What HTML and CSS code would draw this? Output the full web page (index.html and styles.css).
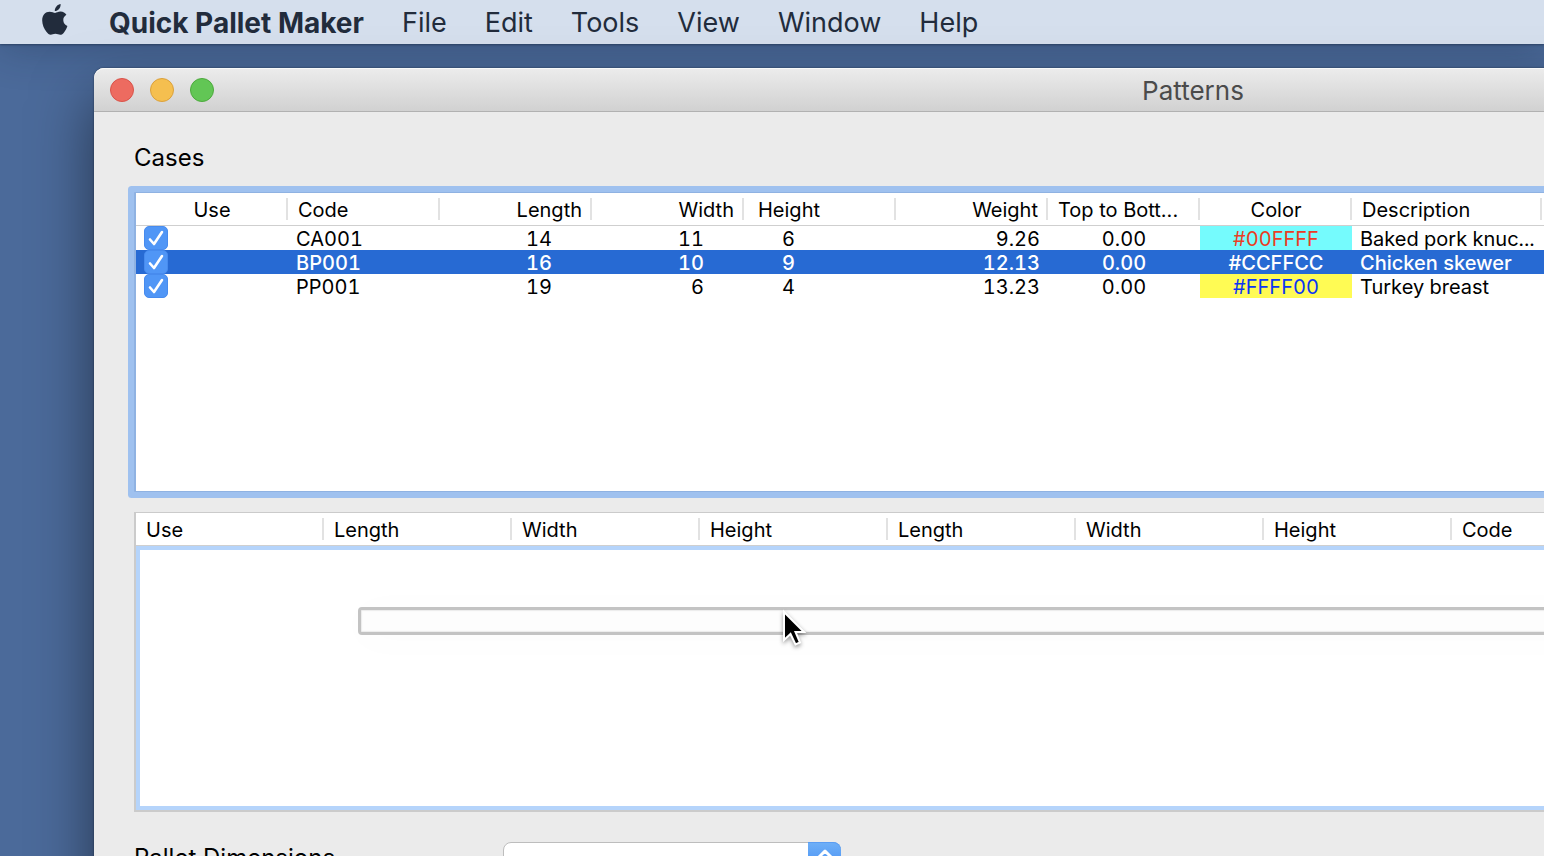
FILE: index.html
```html
<!DOCTYPE html>
<html lang="en">
<head>
<meta charset="utf-8">
<title>Quick Pallet Maker</title>
<link rel="stylesheet" href="styles.css">
</head>
<body>
<nav class="menubar" aria-label="Application menu">
  <button class="apple" type="button" aria-label="Apple menu">
    <svg width="28" height="34" viewBox="0 0 28 34" fill="currentColor" aria-hidden="true">
      <path d="M19.6 1C19.8 3.2 19 5 17.800 6.300C16.700 7.500 15.200 8.200 13.800 8.100C13.600 6.200 14.500 4.400 15.600 3.200C16.700 2 18.300 1.100 19.600 1Z"/>
      <path d="M14.100 9.900C15.400 9.900 17 8.600 19.500 8.600C22.200 8.700 24.200 9.900 25.400 11.800C23.200 13.200 22.200 15 22.300 17.300C22.400 20 23.900 22 26.400 23C25.700 25.300 24.400 27.600 23 29.400C21.900 30.800 20.800 31.800 19.200 31.800C17.500 31.800 16.700 30.800 14.400 30.800C12.200 30.800 11.300 31.800 9.700 31.800C8 31.800 6.800 30.500 5.600 29C3.100 26 1.200 21.600 1.200 17.500C1.200 12 4.500 8.700 8.500 8.700C11 8.700 12.800 9.900 14.100 9.900Z"/>
    </svg>
  </button>
  <button class="menu app-name" type="button">Quick Pallet Maker</button>
  <button class="menu" type="button">File</button>
  <button class="menu" type="button">Edit</button>
  <button class="menu" type="button">Tools</button>
  <button class="menu" type="button">View</button>
  <button class="menu" type="button">Window</button>
  <button class="menu" type="button">Help</button>
</nav>

<main class="window">
  <header class="titlebar">
    <div class="lights">
      <button class="light close" type="button" aria-label="Close"></button>
      <button class="light minimize" type="button" aria-label="Minimize"></button>
      <button class="light zoom" type="button" aria-label="Zoom"></button>
    </div>
    <h1 class="title">Patterns</h1>
  </header>

  <div class="content">
    <h2 class="label" id="cases-label">Cases</h2>
    <div class="list cases">
      <table aria-labelledby="cases-label">
        <colgroup>
          <col class="std"><col class="std"><col class="std"><col class="std"><col class="std"><col class="std"><col class="std"><col class="std"><col class="desc"><col>
        </colgroup>
        <thead>
          <tr>
            <th class="center">Use</th><th>Code</th><th class="right">Length</th><th class="right">Width</th><th class="height">Height</th><th class="right">Weight</th><th>Top to Bott...</th><th class="center">Color</th><th>Description</th><th></th>
          </tr>
        </thead>
        <tbody>
          <tr>
            <td class="use"><span class="check"><input type="checkbox" checked aria-label="Use CA001"><svg viewBox="0 0 24 24" aria-hidden="true"><path d="M6 13.500L10 18L18 6"/></svg></span></td>
            <td>CA001</td><td class="dim">14</td><td class="dim">11</td><td class="tall">6</td><td class="right">9.26</td><td class="center">0.00</td><td class="center cyan">#00FFFF</td><td>Baked pork knuc...</td><td></td>
          </tr>
          <tr class="selected">
            <td class="use"><span class="check"><input type="checkbox" checked aria-label="Use BP001"><svg viewBox="0 0 24 24" aria-hidden="true"><path d="M6 13.500L10 18L18 6"/></svg></span></td>
            <td>BP001</td><td class="dim">16</td><td class="dim">10</td><td class="tall">9</td><td class="right">12.13</td><td class="center">0.00</td><td class="center">#CCFFCC</td><td>Chicken skewer</td><td></td>
          </tr>
          <tr>
            <td class="use"><span class="check"><input type="checkbox" checked aria-label="Use PP001"><svg viewBox="0 0 24 24" aria-hidden="true"><path d="M6 13.500L10 18L18 6"/></svg></span></td>
            <td>PP001</td><td class="dim">19</td><td class="dim">6</td><td class="tall">4</td><td class="right">13.23</td><td class="center">0.00</td><td class="center yellow">#FFFF00</td><td>Turkey breast</td><td></td>
          </tr>
        </tbody>
      </table>
    </div>

    <div class="list patterns">
      <table aria-label="Patterns">
        <colgroup>
          <col class="wide"><col class="wide"><col class="wide"><col class="wide"><col class="wide"><col class="wide"><col class="wide"><col class="wide"><col>
        </colgroup>
        <thead>
          <tr><th>Use</th><th>Length</th><th>Width</th><th>Height</th><th>Length</th><th>Width</th><th>Height</th><th>Code</th><th></th></tr>
        </thead>
      </table>
      <div class="drop-area">
        <div class="progress" role="progressbar" aria-label="Calculating"></div>
      </div>
    </div>

    <div class="field">
      <label class="label" for="pallet">Pallet Dimensions</label>
      <div class="combo">
        <select id="pallet"><option></option></select>
        <span class="arrows">
          <svg width="34" height="44" viewBox="0 0 34 44" aria-hidden="true"><path d="M11 15L17 9L23 15M11 29L17 35L23 29"/></svg>
        </span>
      </div>
    </div>
  </div>
</main>

<svg class="pointer" width="30" height="42" viewBox="0 0 30 42" aria-hidden="true">
  <path d="M2 3V31L8.500 25L13.500 35.500L18 33.500L13.500 23H22Z"/>
</svg>
</body>
</html>
```

FILE: styles.css
```css
* {
  box-sizing: border-box;
}

body {
  margin: 0;
  height: 100vh;
  overflow: hidden;
  display: flex;
  flex-direction: column;
  background: #4b6a9a;
  font-family: Inter, "Liberation Sans", sans-serif;
  color: #000;
}

button {
  margin: 0;
  padding: 0;
  border: 0;
  background: none;
  font: inherit;
  color: inherit;
}

.menubar {
  flex: none;
  display: flex;
  align-items: center;
  gap: 38px;
  height: 44px;
  padding-left: 41px;
  background: #d5dfed;
  color: #222c3c;
  font-size: 27px;
  box-shadow: 0 1px 2px rgba(20, 35, 60, 0.5), 0 4px 40px rgba(20, 35, 60, 0.3);
}

.menu {
  padding-top: 2px;
  line-height: 42px;
  white-space: nowrap;
}

.apple {
  display: flex;
  width: 30px;
  height: 38px;
}

.menu.app-name {
  font-size: 28px;
  font-weight: 700;
}

.window {
  flex: 1 0 auto;
  margin: 24px -748px 0 94px;
  border-radius: 10px 10px 0 0;
  background: #ebebeb;
  box-shadow: 0 0 2px rgba(0, 0, 0, 0.5), 0 30px 60px rgba(0, 0, 0, 0.5);
}

.titlebar {
  display: grid;
  grid-template-columns: 1fr auto 1fr;
  align-items: center;
  height: 44px;
  padding: 0 16px;
  border-bottom: 1px solid #b1b1b1;
  border-radius: 10px 10px 0 0;
  background: linear-gradient(#ececec, #d1d1d1);
  box-shadow: inset 0 1px 0 #f8f8f8;
}

.lights {
  display: flex;
  gap: 16px;
}

.light {
  width: 24px;
  height: 24px;
  border: 1px solid;
  border-radius: 50%;
}

.close {
  background: #ed6b60;
  border-color: #d9534a;
}

.minimize {
  background: #f5bf4f;
  border-color: #dba13b;
}

.zoom {
  background: #62c655;
  border-color: #4daa3d;
}

.title {
  margin: 0;
  padding-top: 2px;
  font-size: 26px;
  font-weight: 400;
  line-height: 42px;
  color: #4b4b4b;
}

.content {
  padding: 30px 40px;
}

.label {
  margin: 0;
  font-size: 24px;
  font-weight: 400;
  line-height: 32px;
}

.list {
  min-height: 300px;
  background: #fff;
  font-size: 20px;
}

.cases {
  margin-top: 18px;
  border: 1px solid #8fb2e2;
  border-left-width: 2px;
  border-radius: 1px;
  box-shadow: 0 0 0 6px #9fc1ef;
}

.patterns {
  display: flex;
  flex-direction: column;
  margin-top: 20px;
  border: 2px solid #cbcbcb;
  border-top-width: 1px;
}

table {
  width: 100%;
  table-layout: fixed;
  border-collapse: separate;
  border-spacing: 0;
}

.std {
  width: 152px;
}

.desc {
  width: 190px;
}

.wide {
  width: 188px;
}

th {
  height: 33px;
  padding: 2px 10px 0;
  border-bottom: 1px solid #cfcfcf;
  background: linear-gradient(#e2e2e2, #e2e2e2) right 5px / 2px 22px no-repeat;
  font-weight: 400;
  line-height: 30px;
  text-align: left;
  white-space: nowrap;
}

td {
  height: 24px;
  padding: 2px 8px 0;
  line-height: 22px;
  white-space: nowrap;
  font-variant-numeric: tabular-nums;
}

td.use {
  padding-top: 0;
}

.right {
  text-align: right;
}

.center {
  text-align: center;
}

th.height {
  padding-left: 14px;
}

.dim {
  padding-right: 40px;
  text-align: right;
}

.tall {
  padding-left: 38px;
}

.selected {
  background: #276ad3;
  color: #fff;
  font-weight: 500;
}

.cyan {
  background: #75fbfd;
  color: #eb3d25;
}

.yellow {
  background: #fffb54;
  color: #0b35f5;
}

.check {
  display: grid;
  width: 24px;
  height: 24px;
}

.check input,
.check svg {
  grid-area: 1 / 1;
  width: 24px;
  height: 24px;
  margin: 0;
}

.check input {
  appearance: none;
  border: 1px solid #478bee;
  border-radius: 5px;
  background: #5096f6;
}

.check svg {
  pointer-events: none;
  fill: none;
  stroke: #fff;
  stroke-width: 2.600;
  stroke-linecap: round;
  stroke-linejoin: round;
}

.drop-area {
  flex: 1;
  padding: 57px 218px 0;
  border: 4px solid #b5d4fb;
}

.progress {
  height: 28px;
  border: 3px solid #c3c3c3;
  border-radius: 4px;
  background: #fdfdfd;
  box-shadow: inset 0 0 1px 1px #ececec, 0 4px 40px rgba(0, 0, 0, 0.020);
}

.field {
  display: flex;
  align-items: flex-start;
  margin-top: 30px;
}

.field .label {
  width: 369px;
}

.combo {
  display: grid;
  width: 338px;
}

.combo select,
.arrows {
  grid-area: 1 / 1;
  height: 44px;
}

.combo select {
  appearance: none;
  border: 1px solid #bdbdbd;
  border-radius: 8px;
  background: #fff;
  font: inherit;
}

.arrows {
  justify-self: end;
  width: 33px;
  border-radius: 0 8px 8px 0;
  background: linear-gradient(#6fb0f7, #2f7cf3);
  box-shadow: inset 0 1px 0 #5a9df3;
  pointer-events: none;
}

.arrows path {
  fill: none;
  stroke: #fff;
  stroke-width: 3;
  stroke-linecap: round;
  stroke-linejoin: round;
}

.pointer {
  position: absolute;
  left: 782px;
  top: 609px;
  fill: #000;
  stroke: #fff;
  stroke-width: 2;
  filter: drop-shadow(0 2px 2px rgba(0, 0, 0, 0.4));
  pointer-events: none;
}
```
